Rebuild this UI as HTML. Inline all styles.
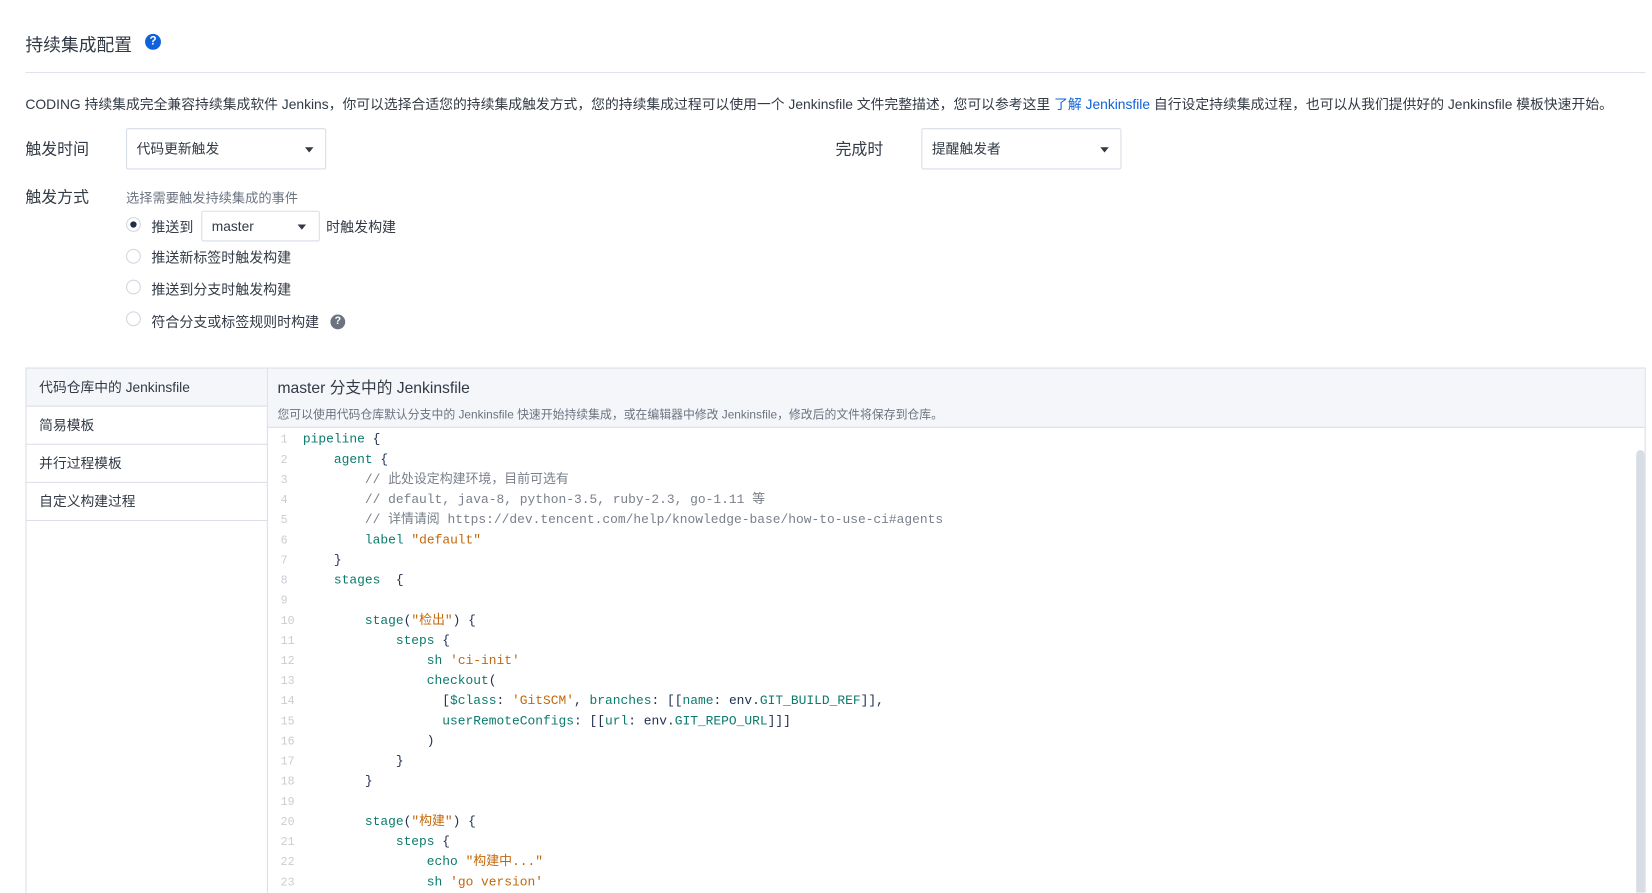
<!DOCTYPE html>
<html><head><meta charset="utf-8"><style>
*{box-sizing:border-box;margin:0;padding:0}
html,body{width:1652px;height:893px;overflow:hidden}
body{background:#fff;font-family:"Liberation Sans","Noto Sans CJK SC",sans-serif;color:#323a45;position:relative}
#w{position:absolute;left:0;top:0;width:1560px;height:843px;transform:scale(1.059);transform-origin:0 0;overflow:hidden}
.abs{position:absolute}
.sel{position:absolute;border:1px solid #d8dde6;border-radius:2px;background:#fff;font-size:13px;color:#323a45}
.caret{position:absolute;width:0;height:0;border-left:4px solid transparent;border-right:4px solid transparent;border-top:5px solid #323a45}
.radio{position:absolute;left:119px;width:14px;height:14px;border:1px solid #d0d5de;border-radius:50%;background:#fff}
.lbl{position:absolute;font-size:13.2px;color:#323a45}
.side div{height:36px;line-height:35px;padding-left:12px;font-size:13px;border-bottom:1px solid #dadee6;color:#323a45;white-space:nowrap}
.code{position:absolute;left:253px;top:406px;height:437px;overflow:hidden;font-family:"Liberation Mono","Noto Sans CJK SC",monospace;font-size:12.2px;line-height:19px;color:#1f2d4f}
.code div{height:19px;white-space:pre;overflow:visible}
.code .n{display:inline-block;width:33px;padding-left:12px;color:#c9cdd4;font-size:11px}
.k{color:#0c7b6c}.s{color:#c2680b}.c{color:#7a808a}
</style></head><body><div id="w">
<div class="abs" style="left:24px;top:29px;font-size:16.8px;color:#323a45">持续集成配置</div>
<div class="abs" style="left:137px;top:32px;width:15px;height:15px;border-radius:50%;background:#0f62d9;color:#fff;font-size:11px;font-weight:bold;text-align:center;line-height:15px">?</div>
<div class="abs" style="left:24px;top:68px;width:1530px;height:1px;background:#dfe3ea"></div>
<div class="abs" style="left:24px;top:88px;font-size:13.05px;white-space:nowrap;color:#323a45">CODING 持续集成完全兼容持续集成软件 Jenkins，你可以选择合适您的持续集成触发方式，您的持续集成过程可以使用一个 Jenkinsfile 文件完整描述，您可以参考这里 <span style="color:#0f62d9">了解 Jenkinsfile</span> 自行设定持续集成过程，也可以从我们提供好的 Jenkinsfile 模板快速开始。</div>
<div class="abs" style="left:24px;top:130px;font-size:15px">触发时间</div>
<div class="sel" style="left:119px;top:121px;width:189px;height:39px;line-height:37px;padding-left:9px">代码更新触发<span class="caret" style="left:168px;top:17px"></span></div>
<div class="abs" style="left:789px;top:130px;font-size:15px">完成时</div>
<div class="sel" style="left:870px;top:121px;width:189px;height:39px;line-height:37px;padding-left:9px">提醒触发者<span class="caret" style="left:168px;top:17px"></span></div>
<div class="abs" style="left:24px;top:175px;font-size:15px">触发方式</div>
<div class="abs" style="left:119px;top:176px;font-size:12.5px;color:#6b7380">选择需要触发持续集成的事件</div>
<div class="radio" style="top:205px"><div style="position:absolute;left:3px;top:3px;width:6px;height:6px;border-radius:50%;background:#1f2d4f"></div></div>
<div class="lbl" style="left:143px;top:204px">推送到</div>
<div class="sel" style="left:190px;top:199px;width:112px;height:29px;line-height:27px;padding-left:9px">master<span class="caret" style="left:90px;top:12px"></span></div>
<div class="lbl" style="left:308px;top:204px">时触发构建</div>
<div class="radio" style="top:235px"></div><div class="lbl" style="left:143px;top:233px">推送新标签时触发构建</div>
<div class="radio" style="top:264px"></div><div class="lbl" style="left:143px;top:263px">推送到分支时触发构建</div>
<div class="radio" style="top:294px"></div><div class="lbl" style="left:143px;top:294px">符合分支或标签规则时构建</div>
<div class="abs" style="left:312px;top:297px;width:14px;height:14px;border-radius:50%;background:#6b7380;color:#fff;font-size:10px;font-weight:bold;text-align:center;line-height:14px">?</div>
<div class="abs" style="left:24px;top:347px;width:1530px;height:497px;border:1px solid #dadee6;border-bottom:none"></div>
<div class="abs side" style="left:25px;top:348px;width:227px">
<div style="background:#f4f6fa">代码仓库中的 Jenkinsfile</div><div>简易模板</div><div>并行过程模板</div><div>自定义构建过程</div></div>
<div class="abs" style="left:252px;top:348px;width:1px;height:495px;background:#dadee6"></div>
<div class="abs" style="left:253px;top:348px;width:1300px;height:56px;background:#f4f6fa;border-bottom:1px solid #dadee6"></div>
<div class="abs" style="left:262px;top:355px;font-size:14.8px;color:#323a45">master 分支中的 Jenkinsfile</div>
<div class="abs" style="left:262px;top:383px;font-size:11.2px;color:#6b7380;white-space:nowrap">您可以使用代码仓库默认分支中的 Jenkinsfile 快速开始持续集成，或在编辑器中修改 Jenkinsfile，修改后的文件将保存到仓库。</div>
<div class="abs" style="left:1545px;top:425px;width:8px;height:418px;background:#d8dde5;border-radius:4px 4px 0 0"></div>
<div class="code">
<div><span class="n">1</span><span class="k">pipeline</span> {</div>
<div><span class="n">2</span>    <span class="k">agent</span> {</div>
<div><span class="n">3</span>        <span class="c">// 此处设定构建环境，目前可选有</span></div>
<div><span class="n">4</span>        <span class="c">// default, java-8, python-3.5, ruby-2.3, go-1.11 等</span></div>
<div><span class="n">5</span>        <span class="c">// 详情请阅 https://dev.tencent.com/help/knowledge-base/how-to-use-ci#agents</span></div>
<div><span class="n">6</span>        <span class="k">label</span> <span class="s">"default"</span></div>
<div><span class="n">7</span>    }</div>
<div><span class="n">8</span>    <span class="k">stages</span>  {</div>
<div><span class="n">9</span></div>
<div><span class="n">10</span>        <span class="k">stage</span>(<span class="s">"检出"</span>) {</div>
<div><span class="n">11</span>            <span class="k">steps</span> {</div>
<div><span class="n">12</span>                <span class="k">sh</span> <span class="s">'ci-init'</span></div>
<div><span class="n">13</span>                <span class="k">checkout</span>(</div>
<div><span class="n">14</span>                  [<span class="k">$class</span>: <span class="s">'GitSCM'</span>, <span class="k">branches</span>: [[<span class="k">name</span>: env.<span class="k">GIT_BUILD_REF</span>]],</div>
<div><span class="n">15</span>                  <span class="k">userRemoteConfigs</span>: [[<span class="k">url</span>: env.<span class="k">GIT_REPO_URL</span>]]]</div>
<div><span class="n">16</span>                )</div>
<div><span class="n">17</span>            }</div>
<div><span class="n">18</span>        }</div>
<div><span class="n">19</span></div>
<div><span class="n">20</span>        <span class="k">stage</span>(<span class="s">"构建"</span>) {</div>
<div><span class="n">21</span>            <span class="k">steps</span> {</div>
<div><span class="n">22</span>                <span class="k">echo</span> <span class="s">"构建中..."</span></div>
<div><span class="n">23</span>                <span class="k">sh</span> <span class="s">'go version'</span></div>
</div>
</div></body></html>
